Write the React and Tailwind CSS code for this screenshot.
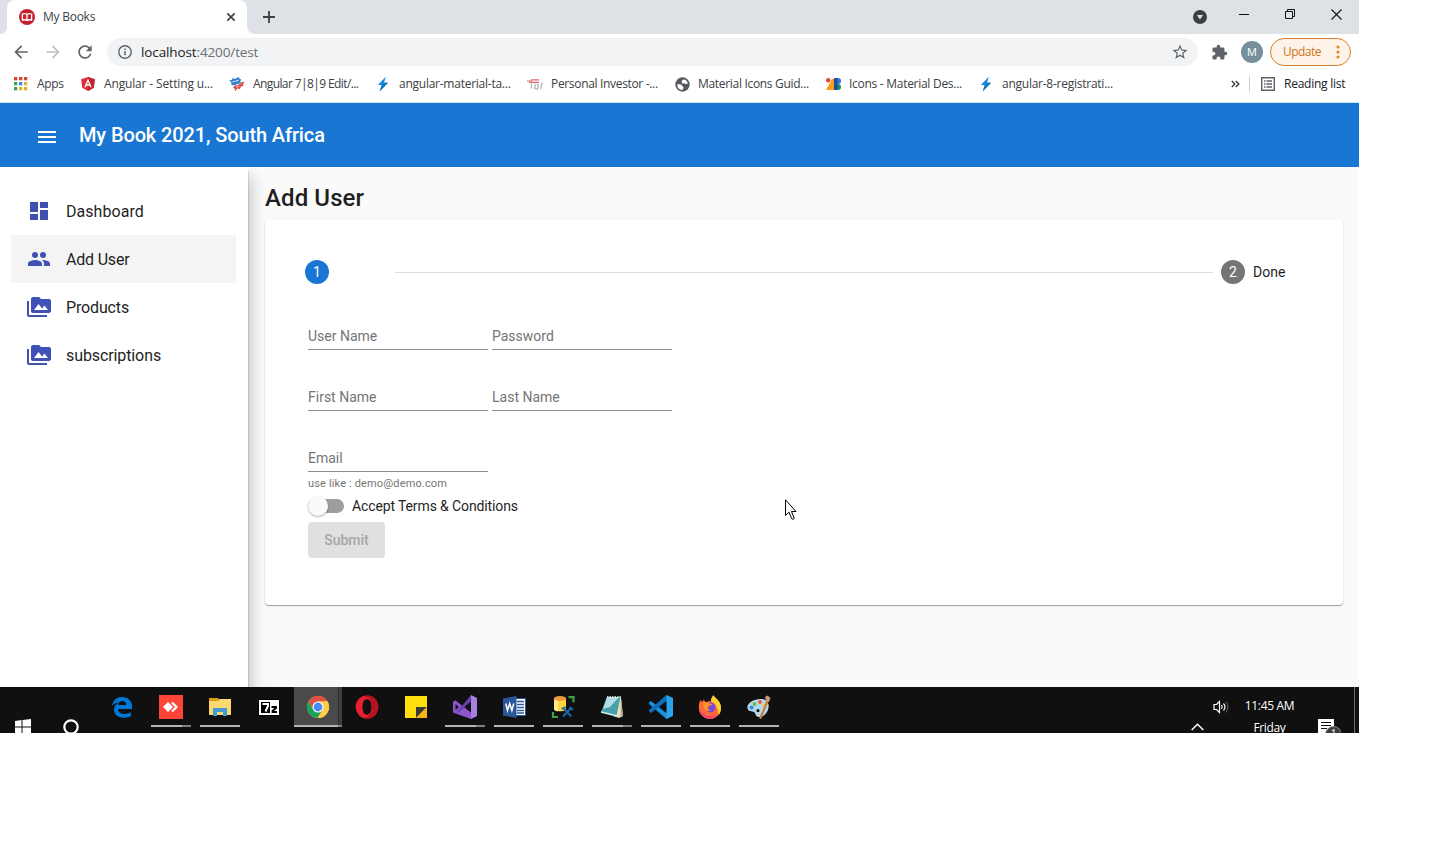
import React from "react";
import {
  MdDashboard,
  MdPermMedia,
  MdMenu,
  MdStarBorder,
  MdExtension,
  MdRefresh,
  MdArrowBack,
  MdArrowForward,
} from "react-icons/md";

const ui = "font-['Open_Sans','Noto_Sans',sans-serif]";

function BooksIcon() {
  return (
    <svg width="16" height="16" viewBox="0 0 16 16">
      <circle cx="8" cy="8" r="8" fill="#c5202f" />
      <path d="M3.400 5C5 4.500 6.800 4.600 8 5.500c1.200-.900 3-1 4.600-.500v6C11 10.600 9.200 10.700 8 11.500c-1.200-.800-3-.900-4.600-.500zM8 5.500v6" fill="none" stroke="#fff" strokeWidth="1.300" />
    </svg>
  );
}

function TabBar() {
  return (
    <div className="flex h-[34px] bg-[#dee1e6]">
      <div className="flex h-[34px] w-[7px] items-end bg-white">
        <div className="h-[34px] w-[7px] rounded-br-[7px] bg-[#dee1e6]" />
      </div>
      <div className="bg-[#dee1e6]">
        <div className="flex h-[34px] w-[240px] items-center rounded-t-[8px] bg-white pl-3 pr-[11px]">
          <BooksIcon />
          <span className="ml-2 flex-1 text-[12px] tracking-[-0.25px] text-[#3c4043]">My Books</span>
          <svg width="10" height="10" viewBox="0 0 10 10">
            <path d="M1.300 1.300l7.400 7.400M8.700 1.300l-7.400 7.400" stroke="#3c4043" strokeWidth="1.700" />
          </svg>
        </div>
      </div>
      <div className="h-[34px] w-[8px] bg-white">
        <div className="h-[34px] w-[8px] rounded-bl-[8px] bg-[#dee1e6]" />
      </div>
      <div className="flex flex-1 items-center pl-2">
        <svg width="12" height="12" viewBox="0 0 12 12">
          <path d="M6 0v12M0 6h12" stroke="#3c4043" strokeWidth="1.800" />
        </svg>
        <div className="flex-1" />
        <svg className="mr-[32px]" width="14" height="14" viewBox="0 0 14 14">
          <circle cx="7" cy="7" r="7" fill="#3c4043" />
          <path d="M3.900 5h6.200L7 9.600z" fill="#dee1e6" />
        </svg>
        <svg className="mb-[6px] mr-[36px]" width="10" height="10" viewBox="0 0 10 10">
          <path d="M0 5.500h10" stroke="#111" />
        </svg>
        <svg className="mb-[6px] mr-[36px]" width="10" height="10" viewBox="0 0 10 10" fill="none" stroke="#111">
          <path d="M.5 2.500h7v7h-7zM2.500 2.500v-2h7v7h-2" />
        </svg>
        <svg className="mb-[6px] mr-[17px]" width="11" height="11" viewBox="0 0 11 11">
          <path d="M.5.5l10 10M10.500.5l-10 10" stroke="#111" strokeWidth="1.100" />
        </svg>
      </div>
    </div>
  );
}

function AddressBar() {
  return (
    <div className="flex h-[36px] items-center pl-[11px]">
      <MdArrowBack className="size-[20px] text-[#5f6368]" />
      <MdArrowForward className="ml-[12px] size-[20px] text-[#bdc1c6]" />
      <MdRefresh className="ml-[12px] size-[20px] text-[#5f6368]" />
      <div className="ml-[12px] flex h-7 w-[1091px] items-center rounded-full bg-[#f1f3f4] pl-[11px] pr-[9px]">
        <svg width="14" height="14" viewBox="0 0 14 14">
          <circle cx="7" cy="7" r="6.200" fill="none" stroke="#5f6368" strokeWidth="1.400" />
          <path d="M7 6v4.300M7 3.500v1.500" stroke="#5f6368" strokeWidth="1.500" />
        </svg>
        <span className="ml-[9px] flex-1 text-[13.5px] tracking-[-0.12px] text-[#6b6f74]">
          <span className="text-[#202124]">localhost</span>:4200/test
        </span>
        <MdStarBorder className="size-[18px] text-[#5f6368]" />
      </div>
      <MdExtension className="ml-[13px] size-[17px] text-[#5f6368]" />
      <div className="ml-[13px] flex size-[22px] items-center justify-center rounded-full bg-[#78909c] text-[11px] text-white">M</div>
      <div className="ml-[7px] flex h-7 w-[81px] items-center rounded-full border border-[#d5802f] bg-[#fdf3e9] pl-[12px] text-[12px] tracking-[-0.55px] text-[#d0741c]">
        <span className="w-[53px]">Update</span>
        <svg width="4" height="14" viewBox="0 0 4 14" fill="#e8871e">
          <circle cx="2" cy="2" r="1.600" />
          <circle cx="2" cy="7" r="1.600" />
          <circle cx="2" cy="12" r="1.600" />
        </svg>
      </div>
    </div>
  );
}

function AppsIcon() {
  const colors = ["#d9453a", "#d9453a", "#d9453a", "#34a853", "#4285f4", "#e5b02c", "#34a853", "#e5b02c", "#e5b02c"];
  return (
    <svg width="14" height="14" viewBox="0 0 14 14">
      {colors.map((c, i) => (
        <rect key={i} x={(i % 3) * 5} y={Math.floor(i / 3) * 5} width="3.300" height="3.300" fill={c} />
      ))}
    </svg>
  );
}

function AngularIcon() {
  return (
    <svg width="14" height="14" viewBox="0 0 14 14">
      <path d="M7 0l6.800 2.300-1 8.500L7 14l-5.800-3.200-1-8.500z" fill="#dd2c3a" />
      <path d="M7 0l6.800 2.300-1 8.500L7 14z" fill="#bf2430" />
      <path d="M4 10.200L7 3.200l3 7M5.200 8h3.600" fill="none" stroke="#fff" strokeWidth="1.300" />
    </svg>
  );
}

function TechIcon() {
  return (
    <svg width="16" height="15" viewBox="0 0 16 15">
      <path d="M0 3.500l3-.5.500-2 2 1L10 0l.5 2 2 .5-1.500 2L13 6 8 7 5 8.500 2 7.500l.5-2z" fill="#2f7fd0" />
      <path d="M6 8.500L11 7l3-2.500 1.500 1L14 7l.5 2-2.500.5-1 2.500-2.500-.5L6 14.500 6 12l-2-1.500z" fill="#e0504c" />
      <path d="M3.500 5l2-.8M6.500 4.500l3-1.500M7.500 10l2-1" stroke="#e8f2fc" strokeWidth="1.100" />
    </svg>
  );
}

function BoltIcon() {
  return (
    <svg width="12" height="16" viewBox="0 0 12 16">
      <path d="M8.800.8L.8 9h4L2.800 15.200 11 6.700H7z" fill="#1389e0" />
      <path d="M4.800 9L2.800 15.200 11 6.700H7L6.200 9z" fill="#1272b4" />
    </svg>
  );
}

function InvestorIcon() {
  return (
    <svg width="16" height="13" viewBox="0 0 16 13" fill="none">
      <path d="M0 3h5M2 4.300h10M4 1.800h8" stroke="#e3676c" strokeWidth="1.200" />
      <path d="M4.500 5.500v5M8 5.500v5h1.500M10 6l1.500 2-1.500 4M15.500 4.500l-2 6.500" stroke="#b5b5b5" strokeWidth="1.300" />
    </svg>
  );
}

function GlobeIcon() {
  return (
    <svg width="15" height="15" viewBox="0 0 15 15">
      <circle cx="7.500" cy="7.500" r="7.200" fill="#55595e" />
      <path d="M2.200 7.500c2-.3 4.300-.2 4.800 1.200.4 1 1.500.6 1.500 2S7.500 13 6.500 12.900C4 12.500 2.200 10.500 2.200 7.500zM8 2.700c2-.5 4 1 4.700 3.300-.4 1.500-1.700 1-2.700.7-1.200-.4-2.500.4-3-.7S6.800 3 8 2.700z" fill="#fff" />
    </svg>
  );
}

function DesignIcon() {
  return (
    <svg width="15" height="12" viewBox="0 0 15 12">
      <circle cx="2.200" cy="2.200" r="2.200" fill="#ea4335" />
      <path d="M0 12L6 1h2v11z" fill="#f9a01b" />
      <circle cx="12" cy="3" r="3" fill="#3375dd" />
      <circle cx="12" cy="9" r="3" fill="#168d52" />
      <path d="M8 0h3.500v12H8z" fill="#1a4fa5" />
    </svg>
  );
}

const bookmarks = [
  { Icon: AppsIcon, label: "Apps", box: "w-[67px]", gap: "w-[23px]", track: "tracking-[-0.3px]" },
  { Icon: AngularIcon, label: "Angular - Setting u...", box: "w-[149px]", gap: "w-[23px]", track: "tracking-[-0.15px]" },
  { Icon: TechIcon, label: "Angular 7|8|9 Edit/...", box: "w-[147px]", gap: "w-[24px] -ml-px", track: "tracking-[-0.6px]" },
  { Icon: BoltIcon, label: "angular-material-ta...", box: "w-[151px]", gap: "w-[22px]", track: "tracking-[-0.25px]" },
  { Icon: InvestorIcon, label: "Personal Investor -...", box: "w-[147px]", gap: "w-[24px] -ml-px", track: "tracking-[-0.33px]" },
  { Icon: GlobeIcon, label: "Material Icons Guid...", box: "w-[151px]", gap: "w-[23px]", track: "tracking-[-0.31px]" },
  { Icon: DesignIcon, label: "Icons - Material Des...", box: "w-[154px]", gap: "w-[23px]", track: "tracking-[-0.28px]" },
  { Icon: BoltIcon, label: "angular-8-registrati...", box: "w-[150px]", gap: "w-[22px]", track: "tracking-[-0.25px]" },
];

function Bookmarks() {
  return (
    <div className="flex h-[32px] items-center pb-[4px] pl-[14px] text-[12px] text-[#3c4043]">
      {bookmarks.map(({ Icon, label, box, gap, track }) => (
        <div key={label} className={`flex shrink-0 items-center whitespace-nowrap ${box} ${track}`}>
          <span className={`shrink-0 ${gap}`}>
            <Icon />
          </span>
          {label}
        </div>
      ))}
      <div className="flex-1" />
      <svg width="9" height="8" viewBox="0 0 9 8" fill="none" stroke="#3c4043" strokeWidth="1.400">
        <path d="M.8 1l3 3-3 3M4.800 1l3 3-3 3" />
      </svg>
      <div className="ml-[9px] h-4 w-px bg-[#cfd1d4]" />
      <svg className="ml-[11px]" width="14" height="14" viewBox="0 0 14 14" fill="none" stroke="#5f6368" strokeWidth="1.400">
        <path d="M.7.7h12.600v12.600H.7zM3 4h1.500M3 7h1.500M3 10h1.500M5.500 4H11M5.500 7H11M5.500 10H11" />
      </svg>
      <span className="ml-[9px] w-[75px] whitespace-nowrap tracking-[-0.25px] text-[#202124]">Reading list</span>
    </div>
  );
}

function PeopleIcon({ className }) {
  return (
    <svg className={className} viewBox="0 0 24 24" fill="currentColor">
      <circle cx="16" cy="8" r="3" />
      <circle cx="8" cy="8" r="3" />
      <path d="M8 13c-2.330 0-7 1.170-7 3.500V19h14v-2.500c0-2.330-4.670-3.500-7-3.500zM16 13c-.290 0-.620.020-.970.050 1.160.840 1.970 1.970 1.970 3.450V19h6v-2.500c0-2.330-4.670-3.500-7-3.500z" />
    </svg>
  );
}

const nav = [
  { Icon: MdDashboard, label: "Dashboard", track: "tracking-[0.05px]" },
  { Icon: PeopleIcon, label: "Add User", active: true, track: "tracking-[-0.2px]" },
  { Icon: MdPermMedia, label: "Products", track: "tracking-[-0.15px]" },
  { Icon: MdPermMedia, label: "subscriptions", track: "tracking-[-0.1px]" },
];

function Sidebar() {
  return (
    <nav className="z-10 w-[248px] shrink-0 bg-white pl-[11px] pr-3 pt-5 shadow-[1px_4px_1px_rgba(0,0,0,0.1),4px_10px_14px_rgba(0,0,0,0.2)]">
      {nav.map(({ Icon, label, active, track }) => (
        <div key={label} className={`flex h-12 items-center pl-4 text-[16px] text-[#1f1f1f] ${active ? "bg-[#f4f4f4]" : ""}`}>
          <Icon className="size-6 text-[#3f51b5]" />
          <span className={`ml-[15px] pt-[2px] ${track}`}>{label}</span>
        </div>
      ))}
    </nav>
  );
}

function Field({ label }) {
  return (
    <div className="flex h-[22px] w-[180px] items-start border-b border-[#8e8e8e] text-[14px] leading-[16px] text-[#757575]">
      {label}
    </div>
  );
}

function UserForm() {
  return (
    <div className="mt-[44px] pl-[43px]">
      <div className="flex gap-1">
        <Field label="User Name" />
        <Field label="Password" />
      </div>
      <div className="mt-[39px] flex gap-1">
        <Field label="First Name" />
        <Field label="Last Name" />
      </div>
      <div className="mt-[39px]">
        <Field label="Email" />
      </div>
      <div className="mt-[5px] text-[11px] leading-[13px] tracking-[0.15px] text-[#757575]">use like : demo@demo.com</div>
      <div className="mt-[4px] flex h-6 items-center">
        <div className="flex h-[14px] w-[36px] items-center rounded-full bg-[#9e9e9e]">
          <div className="size-5 shrink-0 rounded-full bg-[#fafafa] shadow-[0_1px_2px_rgba(0,0,0,0.32)]" />
        </div>
        <span className="ml-2 text-[14px] tracking-[-0.12px] text-[#1f1f1f]">Accept Terms &amp; Conditions</span>
      </div>
      <div className="mt-1 flex h-9 w-[77px] items-center justify-center rounded bg-[#e0e0e0] text-[14px] font-medium text-[#a6a6a6]">Submit</div>
    </div>
  );
}

function Main() {
  return (
    <main className="flex-1 bg-[#fafafa] pl-[17px] pr-4 pt-[15px]">
      <h1 className="h-[38px] text-[24px] font-medium leading-8 tracking-[0.1px] text-[#1f1f1f]">Add User</h1>
      <section className="h-[385px] rounded bg-white pt-10 shadow-[0_1px_1px_rgba(0,0,0,0.36),0_0_2px_rgba(0,0,0,0.08)]">
        <div className="flex h-6 items-center pl-10 text-[14px] text-[#1f1f1f]">
          <div className="flex size-6 items-center justify-center rounded-full bg-[#1976d2] text-white">1</div>
          <div className="ml-[66px] mr-2 h-px flex-1 bg-[#dedede]" />
          <div className="flex size-6 items-center justify-center rounded-full bg-[#757575] text-white">2</div>
          <span className="ml-2 w-[90px]">Done</span>
        </div>
        <UserForm />
      </section>
    </main>
  );
}

function EdgeIcon() {
  return (
    <svg width="22" height="22" viewBox="0 0 22 22">
      <path d="M1 10C2 4 6 1 11 1c6 0 10 4 10 9v3H7c0 3 3 5 6.500 5 2.500 0 4.500-.5 6.500-1.700V20c-2 1.200-4.500 1.800-7.500 1.800C6.500 21.800 3 18 3 13.800c0-3 1.500-5.600 5-7.300C5 6.500 2.500 7.800 1 10zm6.200-1h8c0-2.500-1.500-4-3.800-4S7.700 6.500 7.200 9z" fill="#0078d7" fillRule="evenodd" />
    </svg>
  );
}
function AnyDeskIcon() {
  return (
    <svg width="24" height="24" viewBox="0 0 24 24">
      <path d="M0 0h24v24H0z" fill="#ff4538" />
      <path d="M4 12l5-5 5 5-5 5z" fill="#fff" />
      <path d="M13 7.500l4.500 4.500-4.500 4.500" fill="none" stroke="#fff" strokeWidth="2.200" />
    </svg>
  );
}
function FolderIcon() {
  return (
    <svg width="22" height="20" viewBox="0 0 22 20">
      <path d="M0 1h9l2 2h11v15H0z" fill="#dd9d10" />
      <path d="M0 4h9l2-2h11v16H0z" fill="#fcd870" />
      <path d="M4 11h14v8h-4v-4H8v4H4z" fill="#479bd3" />
    </svg>
  );
}
function SevenZipIcon() {
  return (
    <svg width="22" height="17" viewBox="0 0 22 17">
      <path d="M0 0h22v17H0z" fill="#000" />
      <path d="M1 1h20v15H1z" fill="#fff" />
      <path d="M3 3h9v11H3z" fill="#000" />
      <path d="M4.500 5h5.500v2L7.500 12.500" fill="none" stroke="#fff" strokeWidth="2" />
      <path d="M13.500 8h4.500v1l-3.500 3v1H19" fill="none" stroke="#000" strokeWidth="1.800" />
    </svg>
  );
}
function ChromeIcon() {
  return (
    <svg width="24" height="24" viewBox="0 0 24 24">
      <circle cx="12" cy="12" r="11" fill="#ffce44" />
      <path d="M2.400 6.500A11 11 0 0121.600 6.500L12 6.500l-4.800 8z" fill="#de5246" />
      <path d="M2.400 6.500A11 11 0 0011.500 23l5.300-8.300H7.200z" fill="#1aa15f" />
      <path d="M12 6.500h9.600A11 11 0 0111.500 23l5.300-8.300z" fill="#ffce44" />
      <circle cx="12" cy="12" r="5.500" fill="#fff" />
      <circle cx="12" cy="12" r="4.400" fill="#4a8af4" />
    </svg>
  );
}
function OperaIcon() {
  return (
    <svg width="24" height="24" viewBox="0 0 24 24" fillRule="evenodd">
      <path d="M12 .5a11.300 11.500 0 100 23 11.300 11.500 0 000-23zm0 3.800c3 0 4.500 3.400 4.500 7.700s-1.500 7.700-4.500 7.700-4.500-3.400-4.500-7.700S9 4.300 12 4.300z" fill="#e8202f" />
      <path d="M13 .6C19.500 1 23.300 6 23.300 12S19 23.400 13 23.500c-1.500 0-3-.4-4-1 5 .5 8-4 8-10.500S14 1.500 9 1.500c1-.6 2.500-1 4-.9z" fill="#b5121f" />
    </svg>
  );
}
function NotesIcon() {
  return (
    <svg width="22" height="22" viewBox="0 0 22 22">
      <path d="M0 0h22v22H0z" fill="#ffdf0d" />
      <path d="M11 22V11h11z" fill="#3b3a39" />
      <path d="M11 22h11V11z" fill="#f4b414" />
    </svg>
  );
}
function VisualStudioIcon() {
  return (
    <svg width="24" height="24" viewBox="0 0 24 24">
      <path d="M0 6.500L2.500 5.500 18 17.500V24L2.500 18.500 0 17.500z" fill="#8a56c8" />
      <path d="M2.500 9v6L6 12z" fill="#101010" />
      <path d="M2.500 18.500L18 0v6.500L7 16z" fill="#6a3cad" />
      <path d="M18 0l6 3v18l-6 3z" fill="#a77fe0" />
      <path d="M11.500 12L18 7v10z" fill="#101010" />
    </svg>
  );
}
function WordIcon() {
  return (
    <svg width="23" height="22" viewBox="0 0 23 22">
      <path d="M12 2.500h10.500v17H12z" fill="#fff" stroke="#2b579a" />
      <path d="M14 5.500h7M14 8.500h7M14 11.500h7M14 14.500h7M14 17h7" stroke="#2b579a" strokeWidth="1.300" />
      <path d="M0 2.500L13.500 0v22L0 19.500z" fill="#2b579a" />
      <path d="M2.800 7.500l1.700 7 2.200-7 2.200 7 1.800-7" fill="none" stroke="#fff" strokeWidth="1.500" />
    </svg>
  );
}
function DatabaseIcon() {
  return (
    <svg width="24" height="24" viewBox="0 0 24 24">
      <path d="M3 4v10c0 3 12 3 12 0V4z" fill="#ffd53c" />
      <path d="M3 4v10c0 1.300 1.500 2 4 2.400V4z" fill="#ffe98a" />
      <ellipse cx="9" cy="3.500" rx="6" ry="2.500" fill="#ed9c3d" />
      <path d="M17.500 2.200h5v5M2 17v5h5" fill="none" stroke="#43a047" strokeWidth="2.200" />
      <path d="M12.500 13.500l8 8M20.500 12.500L12 21.500M18.500 12l3.500 3M10.500 14l4-2" fill="none" stroke="#1769aa" strokeWidth="1.900" />
    </svg>
  );
}
function NotepadIcon() {
  return (
    <svg width="24" height="24" viewBox="0 0 24 24">
      <path d="M19 2l2 1 2 18-4 2-6-2z" fill="#e8dfc4" />
      <path d="M21 3l2 18-2.500 1.300z" fill="#b5a98a" />
      <path d="M7 2h13.500l-4 19L1 17z" fill="#4aa0ab" />
      <path d="M7 2h12L10 12l-7 2z" fill="#b0dde2" />
      <path d="M7 2h14" stroke="#f3f6f7" strokeWidth="1.500" strokeDasharray="1.500 1" />
      <path d="M1 17l16 4" stroke="#d7edf0" strokeWidth="1.300" />
    </svg>
  );
}
function CodeIcon() {
  return (
    <svg width="24" height="24" viewBox="0 0 24 24">
      <path d="M0 7.500L2 6l16 12.500V24l-1.500-.8L0 9z" fill="#1c8fdb" />
      <path d="M0 16.500L2 18 18 5.500V0l-1.500.8L0 15z" fill="#0b6fb8" />
      <path d="M17.500 0L24 3v18l-6.500 3z" fill="#2ba4ee" />
    </svg>
  );
}
function FirefoxIcon() {
  return (
    <svg width="24" height="24" viewBox="0 0 24 24">
      <path d="M2.500 5l1.500 2 2-2.500 1.500 3c2-1.500 4-1.500 5.500-1.200 0-2.500 1-4.500 2.500-6 1.500 3.200 7.500 5 7.500 13A11.300 11.300 0 0112 24 11.300 11.300 0 01.8 12.500C.8 9.500 1.300 7 2.500 5z" fill="#ff6a35" />
      <path d="M15.500.3c1.500 3.200 7.500 5 7.500 13 0 2.500-.8 5-2.500 7 0-6-2-7.500-3-10.500-1-1.500-3-2.500-4.500-3.500 0-2.500 1-4.500 2.500-6z" fill="#ffcf2e" />
      <path d="M1 14c.5 5.500 5 10 11 10 4 0 7-2 9-5-5 3-14 4-20-5z" fill="#f5456a" />
      <circle cx="12.500" cy="12.500" r="5" fill="#7a48d8" />
      <path d="M5 8c2-1.500 5-1 6.500.5l3 .5c-1 1.800-4 1.200-4.500 3.500-.5 1.500 1 3 3 3-4 2-8-1-8-7.500z" fill="#ff8f29" />
    </svg>
  );
}
function PaintIcon() {
  return (
    <svg width="24" height="24" viewBox="0 0 24 24">
      <path d="M8 5C14 3 20 4 21.500 9c1 6-3 13-9.500 13-4 0-3-4-5-5s-6 0-6.500-4C0 9.500 3 6.500 8 5zm3 9a1.600 1.600 0 100 3.200A1.600 1.600 0 0011 14z" fill="#b5d9ec" fillRule="evenodd" />
      <circle cx="4.500" cy="12.500" r="2" fill="#3d88d8" />
      <circle cx="7.500" cy="9" r="1.900" fill="#6abf43" />
      <circle cx="13" cy="7" r="1.900" fill="#f25635" />
      <circle cx="16.500" cy="10" r="1.500" fill="#f6cc31" />
      <path d="M20.500 6l-7 17" stroke="#c77b36" strokeWidth="2.200" strokeLinecap="round" />
      <path d="M18 2l2.500-1.500L23.500 3 22 7l-3-1z" fill="#c99878" />
    </svg>
  );
}

const tasks = [
  { Icon: EdgeIcon },
  { Icon: AnyDeskIcon, line: true, stacked: true },
  { Icon: FolderIcon, line: true },
  { Icon: SevenZipIcon },
  { Icon: ChromeIcon, current: true },
  { Icon: OperaIcon },
  { Icon: NotesIcon },
  { Icon: VisualStudioIcon, line: true, stacked: true },
  { Icon: WordIcon, line: true },
  { Icon: DatabaseIcon, line: true },
  { Icon: NotepadIcon, line: true, stacked: true },
  { Icon: CodeIcon, line: true },
  { Icon: FirefoxIcon, line: true },
  { Icon: PaintIcon, line: true },
];

function Task({ Icon, line, stacked, current }) {
  return (
    <div className={`mr-px flex h-[40px] w-12 flex-col items-center ${current ? "bg-[linear-gradient(90deg,#4a4a4a_44px,#2e2e2e_44px,#2e2e2e_45px,#3f3f3f_45px)]" : ""}`}>
      <div className="flex h-[38px] items-center pt-[2px]">
        <Icon />
      </div>
      {(line || current) && (
        <div className={`flex h-[2px] bg-[#b4b4b4] ${current ? "w-12" : "w-10"}`}>
          {(stacked || current) && <div className={`ml-auto h-[2px] bg-[#808080] ${current ? "w-1" : "w-[9px]"}`} />}
        </div>
      )}
    </div>
  );
}

function Taskbar() {
  return (
    <footer className="flex h-[46px] overflow-hidden bg-[#101010] text-white">
      <svg className="ml-[15px] mt-[32px] shrink-0" width="16" height="16" viewBox="0 0 16 16" fill="#fff">
        <path d="M0 2l6.500-1v6.500H0zM7.500 1L16 0v7.500H7.500zM0 8.500h6.500V15L0 14zM7.500 8.500H16V16l-8.500-1z" />
      </svg>
      <svg className="ml-[32px] mt-[32px] shrink-0" width="16" height="16" viewBox="0 0 16 16">
        <circle cx="8" cy="8" r="6.700" fill="none" stroke="#fff" strokeWidth="2.200" />
      </svg>
      <div className="ml-[19px] flex">
        {tasks.map((t, i) => (
          <Task key={i} {...t} />
        ))}
      </div>
      <div className="flex-1" />
      <svg className="mt-[36px] shrink-0" width="13" height="8" viewBox="0 0 13 8">
        <path d="M.7 7l5.800-5.800L12.300 7" fill="none" stroke="#fff" strokeWidth="1.500" />
      </svg>
      <svg className="ml-[9px] mt-[13px] shrink-0" width="17" height="14" viewBox="0 0 17 14" fill="none" stroke="#fff">
        <path d="M1 4.500h2.500L6.500 1.500v11L3.500 9.500H1zM8.500 5q1.500 2 0 4M10.500 3.500q3 3.500 0 7" strokeWidth="1.200" />
        <path d="M13 1.500q4 5.500 0 11" stroke="#666" />
      </svg>
      <div className="ml-[9px] w-[62px] whitespace-nowrap pt-[8px] text-center text-[12px] leading-[22px] tracking-[-0.35px]">
        <div>11:45 AM</div>
        <div>Friday</div>
      </div>
      <svg className="ml-[15px] mt-[32px] shrink-0" width="25" height="14" viewBox="0 0 25 14">
        <path d="M2 0h16v14H2z" fill="#fff" />
        <path d="M5 3.500h10M5 6.500h10M5 9.500h6" stroke="#101010" strokeWidth="1.200" />
        <circle cx="17.500" cy="15.500" r="8" fill="#3c3c3c" stroke="#8a8a8a" />
        <text x="14.800" y="18" fontSize="10" fill="#fff" fontFamily="Open Sans">1</text>
      </svg>
      <div className="ml-[13.5px] mr-1 h-full w-px shrink-0 bg-[#6b6b6b]" />
    </footer>
  );
}

export default function App() {
  return (
    <div className="h-[865px] w-[1435px] overflow-hidden bg-white">
      <div className={`relative flex h-[733px] w-[1359px] flex-col ${ui}`}>
        <TabBar />
        <AddressBar />
        <Bookmarks />
        <div className="h-px bg-[#c9e2f7]" />
        <div className="flex h-[584px] flex-col overflow-hidden font-[Roboto,sans-serif]">
          <header className="z-20 flex h-16 shrink-0 items-center bg-[#1976d2] pl-[35px] text-white">
            <MdMenu className="mt-[4px] size-6" />
            <span className="ml-5 text-[20px] font-medium tracking-[-0.12px]">My Book 2021, South Africa</span>
          </header>
          <div className="flex flex-1">
            <Sidebar />
            <Main />
          </div>
        </div>
        <Taskbar />
        <svg className="absolute left-[785px] top-[499px]" width="12" height="21" viewBox="0 0 12 21">
          <path d="M.5.8v15.700l3.500-3.300 2.700 6.500 1.300.6 1.300-.8-2.800-7h4.500z" fill="#fff" stroke="#000" />
        </svg>
      </div>
    </div>
  );
}
